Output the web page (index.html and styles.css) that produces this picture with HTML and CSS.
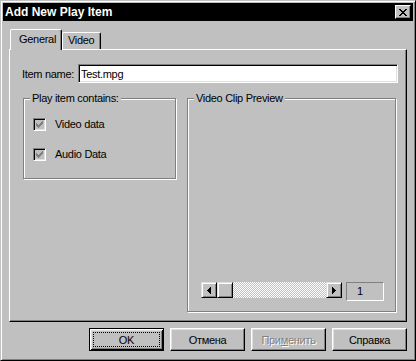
FILE: index.html
```html
<!DOCTYPE html>
<html lang="ru">
<head>
    <meta charset="UTF-8">
    <title>Add New Play Item</title>
    <link rel="stylesheet" href="styles.css">
</head>
<body>
    <div class="window">
        <div class="titlebar">
            <span class="title">Add New Play Item</span>
            <button type="button" class="close-btn">
                <svg width="8" height="7" viewBox="0 0 8 7"><path d="M0 0h2v1h-2zM6 0h2v1h-2zM1 1h2v1h-2zM5 1h2v1h-2zM2 2h4v1h-4zM3 3h2v1h-2zM2 4h4v1h-4zM1 5h2v1h-2zM5 5h2v1h-2zM0 6h2v1h-2zM6 6h2v1h-2z" fill="#000"/></svg>
            </button>
        </div>

        <div class="dialog">
            <div class="tabs">
                <div class="tab tab-active">General</div>
                <div class="tab">Video</div>
            </div>

            <div class="panel">
                <div class="field-row">
                    <label for="itemName" class="field-label">Item name:</label>
                    <input type="text" class="textbox" id="itemName" value="Test.mpg">
                </div>

                <div class="groups">
                    <div class="group group-contains">
                        <div class="group-title">Play item contains:</div>
                        <div class="check-row">
                            <span class="checkbox"><svg width="7" height="7" viewBox="0 0 7 7"><path d="M6 0h1v1h-1zM5 1h2v1h-2zM0 2h1v1h-1zM4 2h3v1h-3zM0 3h2v1h-2zM3 3h3v1h-3zM0 4h5v1h-5zM1 5h3v1h-3zM2 6h1v1h-1z" fill="#808080"/></svg></span>
                            <span class="check-label">Video data</span>
                        </div>
                        <div class="check-row">
                            <span class="checkbox"><svg width="7" height="7" viewBox="0 0 7 7"><path d="M6 0h1v1h-1zM5 1h2v1h-2zM0 2h1v1h-1zM4 2h3v1h-3zM0 3h2v1h-2zM3 3h3v1h-3zM0 4h5v1h-5zM1 5h3v1h-3zM2 6h1v1h-1z" fill="#808080"/></svg></span>
                            <span class="check-label">Audio Data</span>
                        </div>
                    </div>

                    <div class="group group-preview">
                        <div class="group-title">Video Clip Preview</div>
                        <div class="scroll-row">
                            <div class="scrollbar">
                                <span class="scroll-btn"><svg width="4" height="7" viewBox="0 0 4 7"><path d="M3 0h1v7h-1zM2 1h1v5h-1zM1 2h1v3h-1zM0 3h1v1h-1z" fill="#000"/></svg></span>
                                <span class="scroll-btn scroll-thumb"></span>
                                <span class="scroll-track"></span>
                                <span class="scroll-btn"><svg width="4" height="7" viewBox="0 0 4 7"><path d="M0 0h1v7h-1zM1 1h1v5h-1zM2 2h1v3h-1zM3 3h1v1h-1z" fill="#000"/></svg></span>
                            </div>
                            <div class="frame-num">1</div>
                        </div>
                    </div>
                </div>
            </div>

            <div class="buttons">
                <button type="button" class="btn btn-default">OK</button>
                <button type="button" class="btn">Отмена</button>
                <button type="button" class="btn btn-disabled">При<u>м</u>енить</button>
                <button type="button" class="btn">Справка</button>
            </div>
        </div>
    </div>
</body>
</html>
```

FILE: styles.css
```css
body {
    margin: 0;
    background-color: #c0c0c0;
    color: #000;
    font-family: "Liberation Sans", Arial, sans-serif;
    font-size: 11px;
    letter-spacing: -0.3px;
}

.window {
    width: 416px;
    height: 361px;
    box-sizing: border-box;
    padding: 2px;
    border: 1px solid;
    border-color: #c0c0c0 #000 #000 #c0c0c0;
    box-shadow: inset 1px 1px #fff, inset -1px -1px #808080;
    background-color: #c0c0c0;
}

/* Заголовок окна */
.titlebar {
    height: 18px;
    background-color: #000;
    display: flex;
    align-items: center;
    justify-content: space-between;
    padding: 0 2px;
}

.title {
    color: #fff;
    font-weight: bold;
    font-size: 12px;
    letter-spacing: 0;
    line-height: 18px;
}

.close-btn {
    width: 16px;
    height: 14px;
    padding: 0;
    display: flex;
    align-items: center;
    justify-content: center;
    background-color: #c0c0c0;
    border: 1px solid;
    border-color: #fff #000 #000 #fff;
    box-shadow: inset -1px -1px #808080;
}

.dialog {
    padding: 0 6px;
}

/* Вкладки */
.tabs {
    display: flex;
    align-items: flex-end;
    margin-top: 8px;
    padding-left: 1px;
}

.tab {
    box-sizing: border-box;
    height: 17px;
    width: 39px;
    padding-left: 5px;
    line-height: 14px;
    white-space: nowrap;
    border: 1px solid;
    border-bottom: none;
    border-color: #fff #000 #000 #fff;
    border-radius: 2px 2px 0 0;
    box-shadow: inset -1px 0 #808080;
    background-color: #c0c0c0;
}

.tab-active {
    width: 52px;
    height: 21px;
    padding: 2px 0 0 8px;
    margin-bottom: -1px;
    position: relative;
    z-index: 1;
}

.panel {
    box-sizing: border-box;
    height: 273px;
    padding: 14px 8px 0 12px;
    border: 1px solid;
    border-color: #fff #000 #000 #fff;
    box-shadow: inset -1px -1px #808080;
}

.field-row {
    display: flex;
    align-items: center;
}

.field-label {
    width: 56px;
    white-space: nowrap;
}

.textbox {
    flex: 1;
    height: 19px;
    box-sizing: border-box;
    margin: 0;
    padding: 0 2px;
    font: inherit;
    letter-spacing: inherit;
    background-color: #fff;
    border: 1px solid;
    border-color: #808080 #fff #fff #808080;
    box-shadow: inset 1px 1px #000, inset -1px -1px #dfdfdf;
    outline: none;
}

/* Рамки групп */
.groups {
    display: grid;
    grid-template-columns: 153px 209px;
    column-gap: 11px;
    align-items: start;
    margin: 15px 0 0 1px;
}

.group {
    box-sizing: border-box;
    border: 1px solid #808080;
    box-shadow: 1px 1px #fff, inset 1px 1px #fff;
}

.group-contains {
    height: 81px;
    padding-left: 9px;
}

.group-preview {
    height: 214px;
    display: flex;
    flex-direction: column;
    padding: 0 0 10px 13px;
}

.group-title {
    align-self: flex-start;
    display: table;
    white-space: nowrap;
    line-height: 14px;
    margin: -8px 0 0 -3px;
    padding: 0 2px;
    background-color: #c0c0c0;
}

.group-preview .group-title {
    margin-left: -7px;
}

.check-row {
    display: flex;
    align-items: flex-start;
    height: 14px;
    margin-top: 13px;
}

.check-row + .check-row {
    margin-top: 16px;
}

.checkbox {
    width: 13px;
    height: 13px;
    box-sizing: border-box;
    display: flex;
    align-items: center;
    justify-content: center;
    background-color: #c0c0c0;
    border: 1px solid;
    border-color: #808080 #fff #fff #808080;
    box-shadow: inset 1px 1px #000, inset -1px -1px #dfdfdf;
}

.check-label {
    margin: -1px 0 0 9px;
    line-height: 14px;
    white-space: nowrap;
}

.scroll-row {
    margin-top: auto;
    display: flex;
    align-items: flex-start;
    gap: 4px;
}

.scrollbar {
    display: flex;
    height: 16px;
}

.scroll-btn {
    width: 16px;
    height: 16px;
    box-sizing: border-box;
    display: flex;
    align-items: center;
    justify-content: center;
    background-color: #c0c0c0;
    border: 1px solid;
    border-color: #dfdfdf #000 #000 #dfdfdf;
    box-shadow: inset 1px 1px #fff, inset -1px -1px #808080;
}

.scroll-track {
    width: 93px;
    background-image: repeating-conic-gradient(#fff 0% 25%, #c0c0c0 0% 50%);
    background-size: 2px 2px;
}

.frame-num {
    width: 38px;
    height: 19px;
    box-sizing: border-box;
    padding: 1px 0 0 10px;
    line-height: 14px;
    border: 1px solid;
    border-color: #808080 #fff #fff #808080;
}

/* Кнопки внизу */
.buttons {
    display: flex;
    justify-content: flex-end;
    gap: 6px;
    margin-top: 6px;
}

.btn {
    width: 75px;
    height: 23px;
    padding: 0;
    font: inherit;
    letter-spacing: inherit;
    color: #000;
    background-color: #c0c0c0;
    border: 1px solid;
    border-color: #fff #000 #000 #fff;
    box-shadow: inset -1px -1px #808080, inset 1px 1px #dfdfdf;
}

.btn-default {
    border-color: #000;
    box-shadow: inset 1px 1px #fff, inset -1px -1px #000, inset 2px 2px #dfdfdf, inset -2px -2px #808080;
    outline: 1px dotted #000;
    outline-offset: -5px;
}

.btn-disabled {
    color: #808080;
    text-shadow: 1px 1px #fff;
}
```
